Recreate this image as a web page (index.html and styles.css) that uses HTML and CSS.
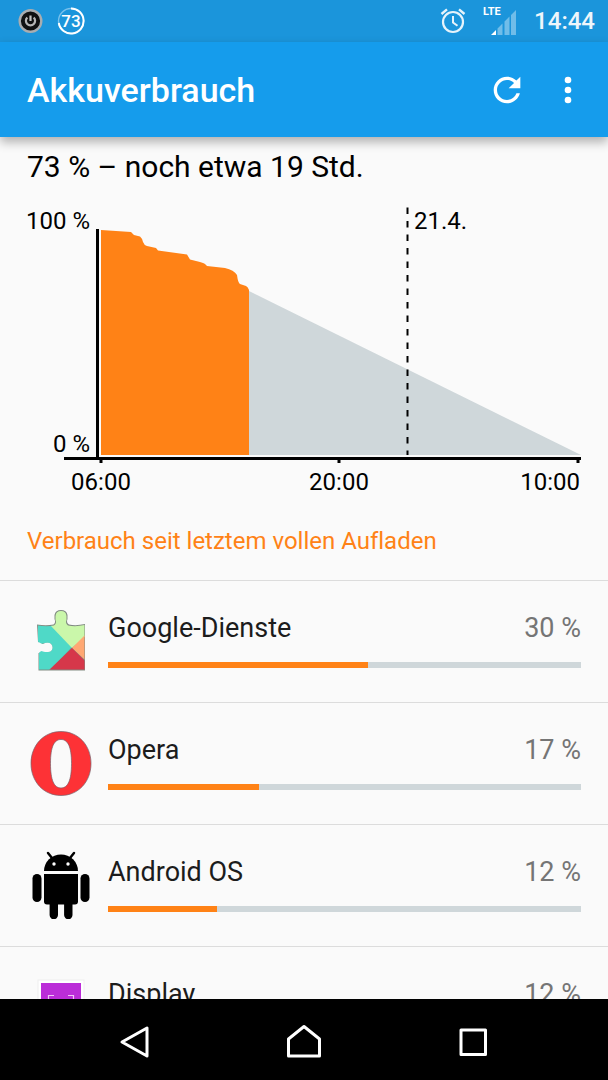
FILE: index.html
```html
<!DOCTYPE html>
<html lang="de">
<head>
<meta charset="utf-8">
<meta name="viewport" content="width=device-width, initial-scale=1">
<title>Akkuverbrauch</title>
<link rel="stylesheet" href="styles.css">
</head>
<body class="screen">
<div class="statusbar">
  <div class="status-group status-group-left">
    <svg class="power" width="26" height="26" viewBox="0 0 26 26" aria-hidden="true">
      <circle cx="13.500" cy="13" r="10.800" fill="#101010" stroke="#a9adb0" stroke-width="2.400"/>
      <path d="M10.300 9.500a4.600 4.600 0 1 0 6.400 0" fill="none" stroke="#b5b5b5" stroke-width="2.200"/>
      <path d="M13.500 7.500v5.500" stroke="#c4c4c4" stroke-width="2.200"/>
    </svg>
    <svg width="28" height="28" viewBox="0 0 28 28" role="img" aria-label="73 Prozent">
      <circle cx="14" cy="14" r="12.500" fill="none" stroke="#79c1ec" stroke-width="1.400"/>
      <path d="M14 1.500A12.500 12.500 0 1 1 1.800 16" fill="none" stroke="#fff" stroke-width="2"/>
      <text class="badge-text" x="14" y="20" text-anchor="middle">73</text>
    </svg>
  </div>
  <div class="status-group status-group-right">
    <svg width="26" height="26" viewBox="0 0 26 26" fill="none" stroke="#e6f3fb" aria-hidden="true">
      <circle cx="13" cy="14" r="10" stroke-width="2.200"/>
      <path d="M13 8v6.500l4.500 3.300" stroke-width="2"/>
      <path d="M1.500 6 7 1.300M24.500 6 19 1.300" stroke-width="2.400"/>
    </svg>
    <svg width="34" height="34" viewBox="0 0 34 34" role="img" aria-label="LTE">
      <text class="network-text" x="0" y="11">LTE</text>
      <path d="M8 31 13 26v5z" fill="#fff"/>
      <path d="M14.500 24.500l5-5V31h-5zM21.500 17.500l5-5V31h-5zM28 11l5-5v25h-5z" fill="#70bde9"/>
    </svg>
    <time class="clock">14:44</time>
  </div>
</div>
<header class="toolbar">
  <h1 class="toolbar-title">Akkuverbrauch</h1>
  <button class="icon-button" type="button" aria-label="Aktualisieren">
    <svg width="40" height="40" viewBox="0 0 24 24" fill="#fff" aria-hidden="true"><path d="M17.650 6.350C16.200 4.900 14.210 4 12 4c-4.420 0-7.990 3.580-7.990 8s3.570 8 7.990 8c3.730 0 6.840-2.550 7.730-6h-2.080c-.82 2.330-3.040 4-5.650 4-3.310 0-6-2.690-6-6s2.690-6 6-6c1.660 0 3.140.69 4.220 1.780L13 11h7V4z"/></svg>
  </button>
  <button class="icon-button" type="button" aria-label="Weitere Optionen">
    <svg width="40" height="40" viewBox="0 0 24 24" fill="#fff" aria-hidden="true"><path d="M12 8a2 2 0 1 0 0-4 2 2 0 0 0 0 4zm0 2a2 2 0 1 0 0 4 2 2 0 0 0 0-4zm0 6a2 2 0 1 0 0 4 2 2 0 0 0 0-4z"/></svg>
  </button>
</header>
<main class="content">
  <p class="summary">73 % – noch etwa 19 Std.</p>
  <svg class="chart" viewBox="27 200 554 300" role="img" aria-label="Akkustand und Prognose">
    <path d="M249 291 581 455H249z" fill="#cfd7da"/>
    <path d="M101 230 131 232 134 235 140 236.500Q142 238 143 242 144 245 147 246L156 248 158 250.500 187 254.500 190 259.500 200 262Q205 263 207 266L225 268Q234 270 237 275 238 283 240 284L246 286Q248 287 249 290V455H101z" fill="#ff8216"/>
    <path d="M97.500 229V458" stroke="#000" stroke-width="3"/>
    <path d="M64 458.500H581" stroke="#000" stroke-width="3"/>
    <path d="M101 458V463M339 458V463M578 458V463" stroke="#000" stroke-width="3"/>
    <path d="M407.500 207.500V455" stroke="#000" stroke-width="2" stroke-dasharray="6.500 7"/>
    <g class="chart-label">
      <text x="90" y="229" text-anchor="end">100 %</text>
      <text x="90" y="452" text-anchor="end">0 %</text>
      <text x="414" y="229">21.4.</text>
      <text x="101" y="490" text-anchor="middle">06:00</text>
      <text x="339" y="490" text-anchor="middle">20:00</text>
      <text x="580" y="490" text-anchor="end">10:00</text>
    </g>
  </svg>
  <h2 class="section-title">Verbrauch seit letztem vollen Aufladen</h2>
  <ul class="usage-list">
    <li class="usage-item">
      <svg class="app-icon" viewBox="0 0 68 68" aria-hidden="true">
        <clipPath id="piece"><path d="M11 18.500Q20 20 27 18.500 30 16 28.500 13V9Q29 4 34 4T39.500 9V13Q38 16 41 18.500 49 20 57.500 18V62.500H12V46Q13 43 17 44.500 25 46.500 25.500 40.500 25 34.500 18 36 12 38 11 34z"/></clipPath>
        <path d="M10 17.500Q19 19 26.500 17.500 29 15.500 27.500 12V8Q28.500 3 34 3T40.500 8V12Q39 15.500 42 17.500 49 19 58 17V63.500H11.500V45Q19 47 26 42L11 35z" fill="#818b82"/>
        <g clip-path="url(#piece)">
          <path d="M8 17H24L45 40 22 64H8z" fill="#4fd9c7"/>
          <path d="M20 0H60V28L45 41 23 18z" fill="#caf7aa"/>
          <path d="M58 28V53L45 41z" fill="#ffa873"/>
          <path d="M45 41 58 54V64H21z" fill="#d6374a"/>
        </g>
        <path d="M7 35.500H12.500Q15 38 18 36 25 34.500 25.500 40.500 25 46.500 17 44.500 13 43 12 46H7z" fill="#fafafa"/>
      </svg>
      <div class="usage-info">
        <div class="usage-labels"><span class="usage-name">Google-Dienste</span><span class="usage-value">30 %</span></div>
        <div class="track"><div class="fill" style="width:55%"></div></div>
      </div>
    </li>
    <li class="usage-item">
      <svg class="app-icon" viewBox="0 0 68 68" aria-hidden="true">
        <path d="M34 2.500C51 2.500 64 16 64 34.500S51 66.500 34 66.500 4 53 4 34.500 17 2.500 34 2.500zM34 10.500C27 10.500 23.500 18 23.500 34.500S27 59 34 59 44.500 51 44.500 34.500 41 10.500 34 10.500z" fill="#fd3236" fill-rule="evenodd" stroke="#77626c" stroke-width=".7"/>
      </svg>
      <div class="usage-info">
        <div class="usage-labels"><span class="usage-name">Opera</span><span class="usage-value">17 %</span></div>
        <div class="track"><div class="fill" style="width:32%"></div></div>
      </div>
    </li>
    <li class="usage-item">
      <svg class="app-icon" viewBox="0 0 68 68" aria-hidden="true">
        <path d="M17 20A17 16.500 0 0 1 51 20z"/>
        <path d="M21 2 25 7M47 2 43 7" stroke="#000" stroke-width="2.500" stroke-linecap="round"/>
        <circle cx="27" cy="13" r="1.700" fill="#fff"/><circle cx="41" cy="13" r="1.700" fill="#fff"/>
        <path d="M17 23H51V50.500a3 3 0 0 1-3 3H45.500V64a4.200 4.200 0 0 1-8.400 0V53.500H31V64a4.200 4.200 0 0 1-8.400 0V53.500H20a3 3 0 0 1-3-3z"/>
        <rect x="5.500" y="23" width="9" height="28" rx="4.500"/><rect x="53.500" y="23" width="9" height="28" rx="4.500"/>
      </svg>
      <div class="usage-info">
        <div class="usage-labels"><span class="usage-name">Android OS</span><span class="usage-value">12 %</span></div>
        <div class="track"><div class="fill" style="width:23%"></div></div>
      </div>
    </li>
    <li class="usage-item">
      <svg class="app-icon" viewBox="0 0 68 68" aria-hidden="true">
        <rect x="11" y="7" width="46" height="56" fill="#fff" stroke="#eee"/>
        <path d="M14 10H54V60H14z" fill="#bb2dd8"/>
        <path d="M21.500 27V22.500H27M41 22.500H46.500V27M21.500 40V44H27M41 44H46.500V40" fill="none" stroke="#efc6f6" stroke-width="1.200"/>
      </svg>
      <div class="usage-info">
        <div class="usage-labels"><span class="usage-name">Display</span><span class="usage-value">12 %</span></div>
        <div class="track"><div class="fill" style="width:23%"></div></div>
      </div>
    </li>
  </ul>
</main>
<nav class="navbar" aria-label="Systemnavigation">
  <button class="nav-button" type="button" aria-label="Zurück">
    <svg width="36" height="36" viewBox="0 0 36 36" aria-hidden="true"><path d="M5 18 30 4V32z"/></svg>
  </button>
  <button class="nav-button" type="button" aria-label="Startbildschirm">
    <svg width="36" height="36" viewBox="0 0 36 36" aria-hidden="true"><path d="M18 2.500 33.500 15V32H2.500V15z"/></svg>
  </button>
  <button class="nav-button" type="button" aria-label="Letzte Apps">
    <svg width="36" height="36" viewBox="0 0 36 36" aria-hidden="true"><path d="M6 6H30.500V30.500H6z"/></svg>
  </button>
</nav>
</body>
</html>
```

FILE: styles.css
```css
* {
  box-sizing: border-box;
}

.screen {
  display: flex;
  flex-direction: column;
  height: 100vh;
  margin: 0;
  overflow: hidden;
  background: #fafafa;
  color: #000;
  font-family: Roboto, "Noto Sans", sans-serif;
  font-variant-ligatures: none;
}

.statusbar {
  display: flex;
  flex: none;
  justify-content: space-between;
  height: 42px;
  padding: 0 13px 0 17px;
  background: #1b95db;
}

.status-group {
  display: flex;
  align-items: center;
}

.status-group-left {
  gap: 14px;
}

.status-group-right {
  gap: 17px;
}

.badge-text {
  fill: #fff;
  font-size: 17px;
  font-weight: 500;
}

.network-text {
  fill: #fff;
  font-size: 11px;
  font-weight: 700;
}

.clock {
  color: #eef6fb;
  font-size: 24px;
  font-weight: 500;
  line-height: 44px;
}

.toolbar {
  position: relative;
  z-index: 1;
  display: flex;
  flex: none;
  align-items: center;
  gap: 21px;
  height: 95px;
  padding: 0 20px 0 27px;
  background: #159cec;
  box-shadow: 0 5px 10px rgba(0, 0, 0, 0.3);
}

.toolbar-title {
  flex: 1;
  margin: 0;
  color: #fff;
  font-size: 34px;
  font-weight: 500;
  line-height: 40px;
}

.icon-button,
.nav-button {
  padding: 0;
  border: 0;
  background: none;
}

.icon-button svg,
.nav-button svg {
  display: block;
}

.content {
  flex: 1;
  min-height: 0;
  overflow: hidden;
}

.summary {
  margin: 0;
  padding: 10px 27px 0;
  font-size: 30px;
  line-height: 40px;
}

.chart {
  display: block;
  width: calc(100% - 54px);
  margin: 13px 27px 0;
  overflow: visible;
}

.chart-label {
  font-size: 24px;
}

.section-title {
  margin: 0;
  padding: 25px 27px 23px;
  color: #ff8216;
  font-size: 24px;
  font-weight: 400;
  line-height: 32px;
}

.usage-list {
  margin: 0;
  padding: 0;
  list-style: none;
}

.usage-item {
  display: flex;
  gap: 13px;
  height: 122px;
  padding: 26px 27px 0;
  border-top: 1px solid #dcdcdc;
}

.app-icon {
  flex: none;
  width: 68px;
  height: 68px;
}

.usage-info {
  flex: 1;
}

.usage-labels {
  display: flex;
  justify-content: space-between;
  padding-bottom: 13px;
  font-size: 27px;
  line-height: 42px;
}

.usage-name {
  color: #1c1c1c;
}

.usage-value {
  color: #757575;
}

.track {
  height: 6px;
  background: #cfd7da;
}

.fill {
  height: 100%;
  background: #ff8216;
}

.navbar {
  display: flex;
  flex: none;
  align-items: center;
  justify-content: center;
  height: 81px;
  padding-top: 5px;
  background: #000;
}

.nav-button {
  display: flex;
  flex: 0 1 169px;
  justify-content: center;
}

.nav-button path {
  fill: none;
  stroke: #fff;
  stroke-width: 3;
  stroke-linejoin: round;
}
```
